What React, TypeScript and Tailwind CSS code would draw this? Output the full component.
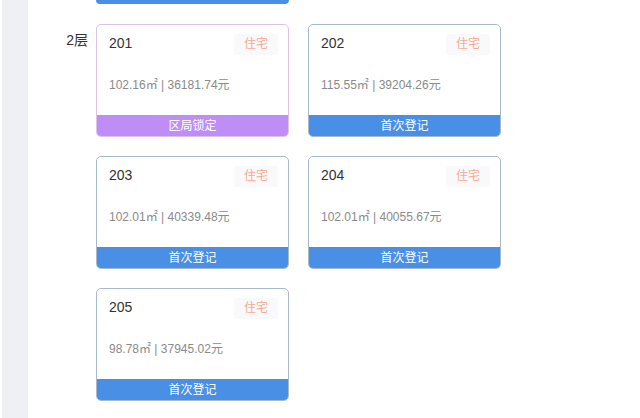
import React from "react";

type Room = { no: string; area: string; price: string; status: string; locked?: boolean };

const rooms: Room[] = [
  { no: "201", area: "102.16㎡", price: "36181.74元", status: "区局锁定", locked: true },
  { no: "202", area: "115.55㎡", price: "39204.26元", status: "首次登记" },
  { no: "203", area: "102.01㎡", price: "40339.48元", status: "首次登记" },
  { no: "204", area: "102.01㎡", price: "40055.67元", status: "首次登记" },
  { no: "205", area: "98.78㎡", price: "37945.02元", status: "首次登记" },
];

const font = { fontFamily: '"Liberation Sans", Arial, "Noto Sans CJK SC", sans-serif' };

function Card({ r }: { r: Room }) {
  return (
    <div
      className={`flex flex-col h-[113px] rounded-[5px] border overflow-hidden bg-white ${
        r.locked ? "border-[#dcc3e8]" : "border-[#a9b9cc]"
      }`}
    >
      <div className="flex justify-between items-start pl-[12px] pr-[10px] pt-[8px]">
        <span className="text-[14px] leading-[21px] text-[#333333]">{r.no}</span>
        <span className="mt-[1px] h-[21px] px-[10px] rounded-[3px] bg-[#f9f9fb] text-[12px] leading-[21px] text-[#f3ab92]">
          住宅
        </span>
      </div>
      <div className="pl-[12px] mt-[21px] text-[12px] leading-[18px] text-[#8a8a8a]">
        {r.area} | {r.price}
      </div>
      <div
        className={`mt-auto h-[21px] flex items-center justify-center text-[12px] text-white ${
          r.locked ? "bg-[#bf8df6]" : "bg-[#4a8fe6]"
        }`}
      >
        {r.status}
      </div>
    </div>
  );
}

export default function App() {
  return (
    <div className="flex w-[640px] h-[418px] bg-white overflow-hidden" style={font}>
      <div className="w-[2px] bg-white" />
      <div className="w-[26px] bg-[#eef0f4]" />
      <div className="flex-1 flex flex-col">
        <div className="flex">
          <div className="w-[68px]" />
          <div className="w-[193px] h-[4px] bg-[#4a8fe6] rounded-b-[5px]" />
        </div>
        <div className="flex mt-[20px]">
          <div className="w-[60px] text-right text-[14px] leading-[20px] text-[#333333] pt-[6px]">2层</div>
          <div className="ml-[8px] grid grid-cols-[193px_193px] gap-x-[19px] gap-y-[19px]">
            {rooms.map((r) => (
              <Card key={r.no} r={r} />
            ))}
          </div>
        </div>
      </div>
    </div>
  );
}
